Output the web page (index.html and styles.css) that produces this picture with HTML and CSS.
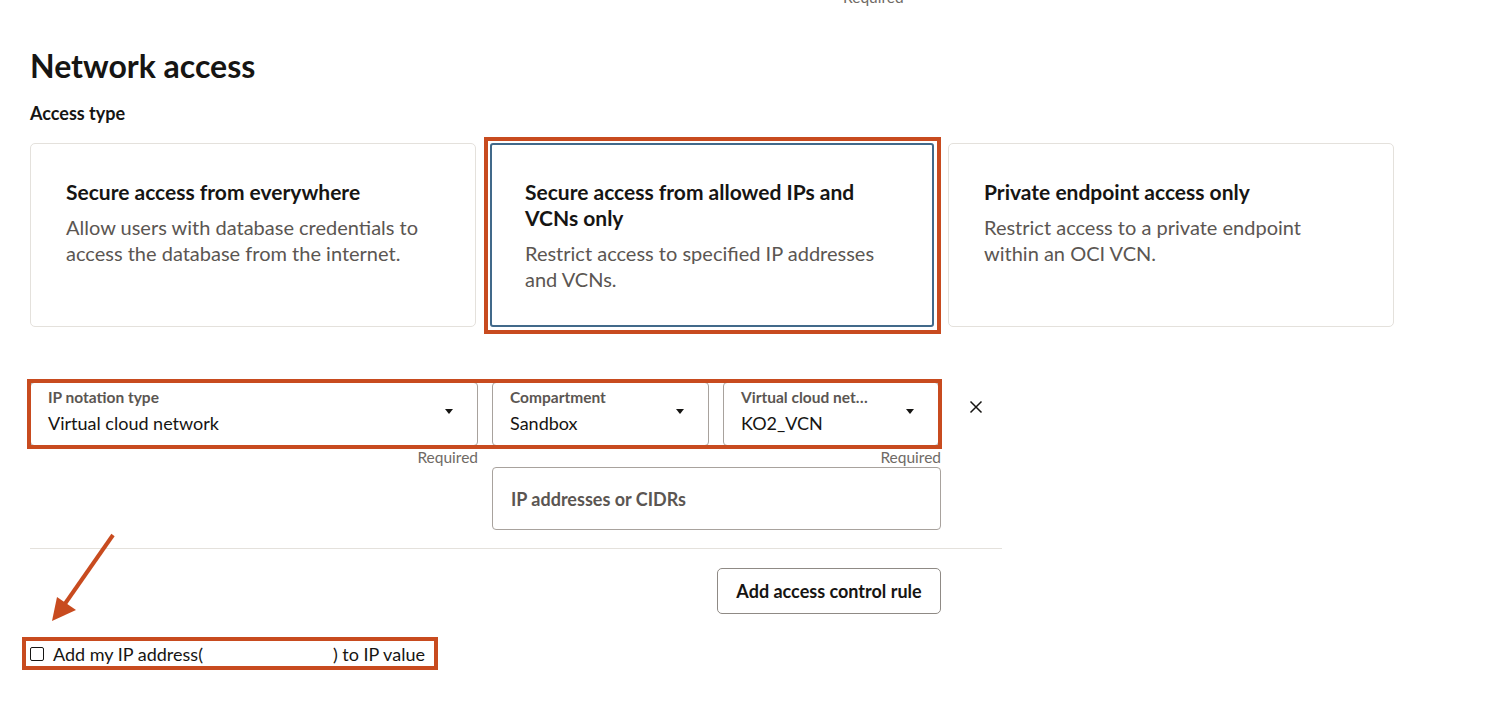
FILE: index.html
```html
<!DOCTYPE html>
<html lang="en">
<head>
<meta charset="utf-8">
<title>Network access</title>
<link rel="stylesheet" href="styles.css">
</head>
<body>
<div class="page">
  <div class="top-req">Required</div>
  <h1 class="title">Network access</h1>
  <div class="section-label">Access type</div>

  <div class="cards">
    <div class="card">
      <div class="card-title">Secure access from everywhere</div>
      <div class="card-desc">Allow users with database credentials to access the database from the internet.</div>
    </div>
    <div class="card card-selected">
      <div class="card-title">Secure access from allowed IPs and VCNs only</div>
      <div class="card-desc">Restrict access to specified IP addresses and VCNs.</div>
    </div>
    <div class="card">
      <div class="card-title">Private endpoint access only</div>
      <div class="card-desc">Restrict access to a private endpoint within an OCI VCN.</div>
    </div>
  </div>

  <div class="rule">
    <div class="rule-row">
      <div class="selects">
        <div class="select select-wide">
          <div class="select-text">
            <div class="select-label">IP notation type</div>
            <div class="select-value">Virtual cloud network</div>
          </div>
          <span class="caret"></span>
        </div>
        <div class="select select-mid">
          <div class="select-text">
            <div class="select-label">Compartment</div>
            <div class="select-value">Sandbox</div>
          </div>
          <span class="caret"></span>
        </div>
        <div class="select select-narrow">
          <div class="select-text">
            <div class="select-label">Virtual cloud net…</div>
            <div class="select-value">KO2_VCN</div>
          </div>
          <span class="caret"></span>
        </div>
      </div>
      <button class="close" aria-label="Remove">
        <svg width="14" height="14" viewBox="0 0 14 14"><path d="M1.5 1.5 L12.5 12.5 M12.5 1.5 L1.5 12.5" stroke="#161513" stroke-width="1.5" fill="none"/></svg>
      </button>
    </div>
    <div class="hints">
      <span class="req req-first">Required</span>
      <span class="req req-last">Required</span>
    </div>
    <div class="ip-field">IP addresses or CIDRs</div>
  </div>

  <div class="divider"></div>

  <div class="actions">
    <button class="btn">Add access control rule</button>
  </div>

  <label class="myip">
    <span class="checkbox"></span>
    <span class="myip-text">Add my IP address(<span class="ip-blank"></span>) to IP value</span>
  </label>

  <svg class="arrow" width="80" height="100" viewBox="0 0 80 100">
    <line x1="73" y1="5" x2="22" y2="78" stroke="#c84b1f" stroke-width="4"/>
    <polygon points="12,91 17,67 36,80" fill="#c84b1f"/>
  </svg>
</div>
</body>
</html>
```

FILE: styles.css
```css
* { box-sizing: border-box; }

html, body {
  margin: 0;
  padding: 0;
  background: #ffffff;
}

body {
  font-family: Lato, "Noto Sans", "Liberation Sans", sans-serif;
  color: #161513;
  overflow: hidden;
}

.page {
  position: relative;
  padding-left: 30px;
  height: 708px;
}

.top-req {
  margin-top: -10px;
  margin-left: 813px;
  height: 14px;
  font-size: 15.5px;
  line-height: 14px;
  color: #6f6a65;
}

.title {
  margin: 43px 0 0 0;
  font-size: 32px;
  line-height: 38px;
  font-weight: 700;
}

.section-label {
  margin-top: 18px;
  font-size: 18px;
  line-height: 20px;
  font-weight: 700;
}

.cards {
  margin-top: 20px;
  display: flex;
  gap: 14px;
}

.card {
  width: 446px;
  height: 184px;
  border: 1px solid #e4e1dc;
  border-radius: 5px;
  padding: 35px 40px 0 35px;
}

.card-selected {
  position: relative;
  width: 444px;
  border: 2px solid #41698a;
  border-radius: 3px;
  padding: 34px 38px 0 33px;
}

.card-selected::after {
  content: "";
  position: absolute;
  left: -8px;
  top: -8px;
  right: -9px;
  bottom: -9px;
  border: 4px solid #c84b1f;
}

.card-title {
  font-size: 21px;
  line-height: 26px;
  font-weight: 700;
}

.card-desc {
  margin-top: 9px;
  font-size: 20px;
  line-height: 26px;
  color: #5b5652;
}

.rule {
  margin-top: 55px;
  width: 911px;
}

.rule-row {
  display: flex;
  align-items: flex-start;
}

.selects {
  display: flex;
  gap: 14px;
  outline: 4px solid #c84b1f;
  outline-offset: -1px;
}

.select {
  height: 64px;
  border: 1px solid #a8a29d;
  border-radius: 4px;
  display: flex;
  align-items: center;
  padding: 0 24px 0 17px;
}

.select-wide { width: 448px; }
.select-mid { width: 217px; }
.select-narrow { width: 216px; }

.select-text {
  flex: 1;
  min-width: 0;
  margin-top: -5px;
}

.select-label {
  font-size: 15.5px;
  line-height: 18px;
  font-weight: 700;
  color: #5b5652;
  white-space: nowrap;
  margin-top: -1px;
}

.select-value {
  margin-top: 5px;
  font-size: 18px;
  line-height: 24px;
  white-space: nowrap;
}

.caret {
  width: 0;
  height: 0;
  border-left: 4.5px solid transparent;
  border-right: 4.5px solid transparent;
  border-top: 5px solid #161513;
  margin-bottom: 6px;
}

.close {
  margin-left: 30px;
  margin-top: 17px;
  width: 16px;
  height: 16px;
  padding: 0;
  border: 0;
  background: none;
  display: flex;
  align-items: center;
  justify-content: center;
}

.hints {
  display: flex;
  margin-top: 2px;
  height: 18px;
}

.req {
  font-size: 15.5px;
  line-height: 18px;
  color: #6f6a65;
}

.req-first {
  width: 448px;
  text-align: right;
}

.req-last {
  flex: 1;
  text-align: right;
}

.ip-field {
  margin-top: 1px;
  margin-left: 462px;
  width: 449px;
  height: 63px;
  border: 1px solid #a8a29d;
  border-radius: 4px;
  display: flex;
  align-items: center;
  padding-left: 18px;
  font-size: 18px;
  font-weight: 700;
  color: #5b5652;
}

.divider {
  margin-top: 18px;
  width: 972px;
  height: 1px;
  background: #e4e1dc;
}

.actions {
  margin-top: 19px;
  width: 911px;
  display: flex;
  justify-content: flex-end;
}

.btn {
  width: 224px;
  height: 46px;
  border: 1px solid #8f8a85;
  border-radius: 5px;
  background: #ffffff;
  font-family: inherit;
  font-size: 18px;
  font-weight: 700;
  color: #161513;
}

.myip {
  margin-top: 27px;
  margin-left: -4px;
  display: inline-flex;
  align-items: center;
  height: 25px;
  padding: 0 9px 0 4px;
  outline: 4px solid #c84b1f;
}

.checkbox {
  width: 14px;
  height: 14px;
  border: 1.5px solid #161513;
  border-radius: 2px;
  margin-right: 9px;
}

.myip-text {
  font-size: 18px;
  line-height: 22px;
  white-space: nowrap;
}

.ip-blank {
  display: inline-block;
  width: 130px;
}

.arrow {
  position: absolute;
  left: 40px;
  top: 540px;
}
```
